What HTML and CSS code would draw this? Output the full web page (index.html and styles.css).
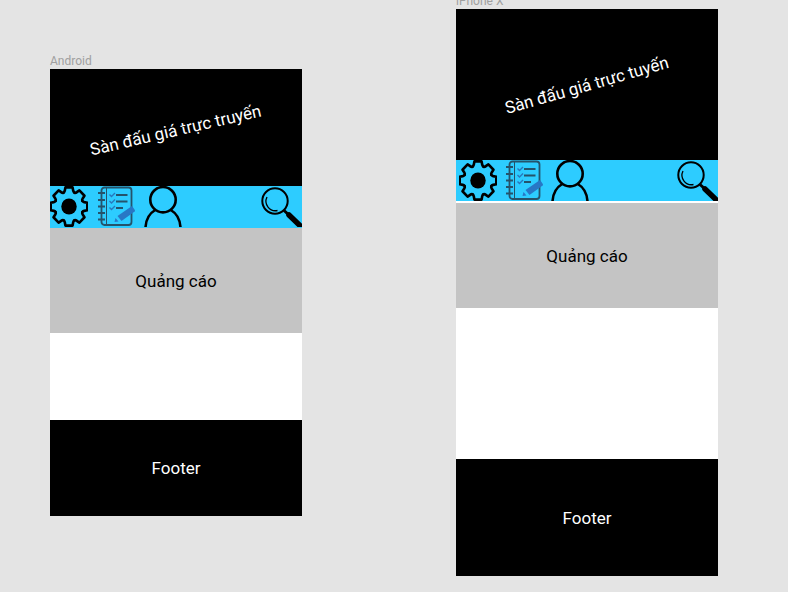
FILE: index.html
```html
<!DOCTYPE html>
<html lang="vi">
<head>
<meta charset="utf-8">
<title>Sàn đấu giá</title>
<link rel="stylesheet" href="styles.css">
</head>
<body>
<svg class="sprite" aria-hidden="true">
  <defs>
    <path id="tooth" d="M-5.5-13.3C-4.6-13.7-4.4-14.4-4.2-15.200L-3.600-18.300H3.600L4.200-15.200C4.400-14.400 4.600-13.700 5.500-13.300"/>
    <symbol id="gear" viewBox="0 0 38 40">
      <g transform="translate(19 20) scale(1 1.040)">
        <g fill="none" stroke="#000" stroke-width="2.6" stroke-linecap="round" stroke-linejoin="round">
          <use href="#tooth"/>
          <use href="#tooth" transform="rotate(45)"/>
          <use href="#tooth" transform="rotate(90)"/>
          <use href="#tooth" transform="rotate(135)"/>
          <use href="#tooth" transform="rotate(180)"/>
          <use href="#tooth" transform="rotate(225)"/>
          <use href="#tooth" transform="rotate(270)"/>
          <use href="#tooth" transform="rotate(315)"/>
        </g>
        <circle r="7.7"/>
      </g>
    </symbol>
    <symbol id="notes" viewBox="0 0 38 40">
      <g fill="none" stroke="#25536b" stroke-width="1.8">
        <rect x="4.500" y="1" width="30" height="37.5" rx="3"/>
        <path d="M9.500 1V38.5" stroke-width="1"/>
        <path d="M1 6.5H8M1 13.5H8M1 20H8M1 26.5H8M1 33H8" stroke-width="2"/>
        <path d="M19 8.5H30.500M19 15H30.500M19 21.500H26" stroke-width="2"/>
      </g>
      <path d="M12.500 8l2 2 3.500-3.500M12.500 14.500l2 2 3.500-3.500M12.500 21l2 2 3.500-3.500" fill="none" stroke="#2878bd" stroke-width="1.400"/>
      <path d="M20.500 29.500L35 19.500L38.500 24.500L24.500 34.500Z" fill="#2877c5"/>
      <path d="M18.500 31.500L21.500 35L17.500 35.500Z" fill="#2877c5"/>
    </symbol>
    <symbol id="person" viewBox="0 0 38 40">
      <g fill="none" stroke="#000" stroke-width="2.600">
        <circle cx="19" cy="13.200" r="12.700"/>
        <path d="M1.500 41C1.900 33 5.200 27 11.200 23.500M36.500 41C36.100 33 32.800 27 26.800 23.500"/>
      </g>
    </symbol>
    <symbol id="search" viewBox="0 0 41 40">
      <g fill="none" stroke="#000">
        <circle cx="14" cy="14.500" r="12.700" stroke-width="2"/>
        <path d="M6 10.500A9.500 9.500 0 0 0 16.500 24" stroke-width="1.300"/>
        <path d="M23 24L28 28.500" stroke-width="3"/>
        <path d="M28 28.500L41 41" stroke-width="5.500" stroke-linecap="round"/>
      </g>
    </symbol>
  </defs>
</svg>
<main class="canvas">
  <section class="artboard android">
    <h2 class="label">Android</h2>
    <div class="screen">
      <header class="hero"><h1 class="title">Sàn đấu giá trực truyến</h1></header>
      <nav class="toolbar">
        <button class="tool" aria-label="Cài đặt"><svg class="icon"><use href="#gear"/></svg></button>
        <button class="tool" aria-label="Danh sách"><svg class="icon"><use href="#notes"/></svg></button>
        <button class="tool" aria-label="Tài khoản"><svg class="icon"><use href="#person"/></svg></button>
        <button class="tool find" aria-label="Tìm kiếm"><svg class="icon"><use href="#search"/></svg></button>
      </nav>
      <aside class="advert">Quảng cáo</aside>
      <div class="content"></div>
      <footer class="footer">Footer</footer>
    </div>
  </section>
  <section class="artboard iphone">
    <h2 class="label">iPhone X</h2>
    <div class="screen">
      <header class="hero"><h1 class="title">Sàn đấu giá trực tuyến</h1></header>
      <nav class="toolbar">
        <button class="tool" aria-label="Cài đặt"><svg class="icon"><use href="#gear"/></svg></button>
        <button class="tool" aria-label="Danh sách"><svg class="icon"><use href="#notes"/></svg></button>
        <button class="tool" aria-label="Tài khoản"><svg class="icon"><use href="#person"/></svg></button>
        <button class="tool find" aria-label="Tìm kiếm"><svg class="icon"><use href="#search"/></svg></button>
      </nav>
      <aside class="advert">Quảng cáo</aside>
      <div class="content"></div>
      <footer class="footer">Footer</footer>
    </div>
  </section>
</main>
</body>
</html>
```
FILE: styles.css
```css
* {
  box-sizing: border-box;
}

body {
  margin: 0;
  background: #e4e4e4;
  color: #000;
  font: 17px/20px Roboto, "Liberation Sans", sans-serif;
}

.sprite {
  display: block;
  width: 0;
  height: 0;
}

.canvas {
  display: grid;
  grid-template-columns: 252fr 262fr;
  column-gap: 154px;
  align-items: start;
  padding: 0 70px 0 50px;
  overflow: hidden;
}

.android {
  margin-top: 53px;
}

/* This artboard is scrolled partly past the top of the canvas. */
.iphone {
  margin-top: -7px;
}

.label {
  margin: 0;
  color: #a0a0a0;
  font-size: 12px;
  font-weight: 400;
  line-height: 16px;
}

.screen {
  background: #fff;
}

.hero,
.advert,
.footer {
  display: flex;
  align-items: center;
  justify-content: center;
}

.hero,
.footer {
  background: #000;
  color: #fff;
}

.hero {
  min-height: 117px;
}

.title {
  margin: 0;
  font-size: 17px;
  font-weight: 400;
  white-space: nowrap;
  transform: rotate(-13deg);
}

.android .hero {
  padding-top: 4px;
}

.toolbar {
  display: flex;
  gap: 9px;
  height: 42px;
  background: #2dccff;
}

.tool {
  width: 38px;
  height: 40px;
  padding: 0;
  border: 0;
  background: none;
}

.find {
  width: 41px;
  margin-left: auto;
}

.android .tool {
  height: 41px;
}

.icon {
  display: block;
  width: 100%;
  height: 100%;
}

.advert {
  min-height: 105px;
  background: #c4c4c4;
}

.content {
  min-height: 87px;
}

.footer {
  min-height: 96px;
}

.iphone .hero {
  min-height: 151px;
}

.iphone .title {
  transform: rotate(-16deg);
}

.iphone .toolbar {
  gap: 8px;
  height: 41px;
  margin-bottom: 2px;
  padding-left: 3px;
}

.iphone .tool {
  height: 41px;
}

.iphone .content {
  min-height: 151px;
}

.iphone .footer {
  min-height: 117px;
}
```
